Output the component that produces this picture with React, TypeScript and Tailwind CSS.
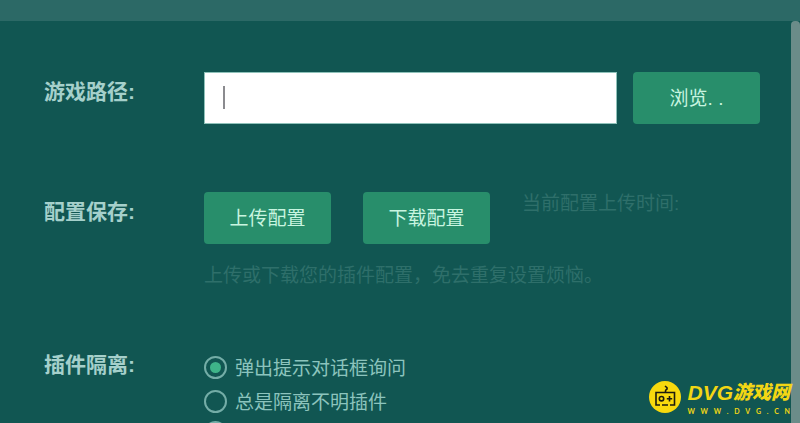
import { useState } from 'react';
import type { ReactNode } from 'react';

const MODOS = [
  { id: 'ask', label: '弹出提示对话框询问' },
  { id: 'always', label: '总是隔离不明插件' },
];

function Row({ title, htmlFor, children }: { title: string; htmlFor?: string; children: ReactNode }) {
  return (
    <section className="flex items-start">
      <label htmlFor={htmlFor} className="w-40 shrink-0 pt-1 text-[21px] leading-8 font-bold text-[#a5d0cb]">
        {title}
      </label>
      <div className="min-w-0 flex-1">{children}</div>
    </section>
  );
}

function Button({ children }: { children: ReactNode }) {
  return (
    <button type="button" className="h-13 w-[127px] shrink-0 rounded-[4px] bg-[#288e6b] pt-0.5 text-[19px] text-[#c8f5e0]">
      {children}
    </button>
  );
}

function Radio({ checked, onChange, label }: { checked: boolean; onChange: () => void; label?: string }) {
  return (
    <input
      type="radio"
      name="modo"
      aria-label={label}
      checked={checked}
      onChange={onChange}
      className="size-[23px] shrink-0 appearance-none rounded-full border-2 border-[#74ada7] bg-clip-content p-1 checked:bg-[#3eb489]"
    />
  );
}

function Brand() {
  return (
    <div className="absolute right-2.5 bottom-1.5 flex items-center gap-1.5">
      <svg viewBox="0 0 32 32" className="mb-1 size-8" aria-hidden="true">
        <circle cx="16" cy="16" r="16" fill="#f7d90d" />
        <g fill="none" stroke="#1b1b10" strokeWidth="1.6">
          <path d="M16.500 11.500V10q0-1 1-1.500t.500-1.800L16 5" />
          <path d="M11 24H7V11.500h18.500V24H21M13 24h6" />
          <circle cx="12.500" cy="17.700" r="2.200" />
          <path d="M20.500 15v5.400M17.800 17.700h5.400" />
        </g>
      </svg>
      <div className="text-[#f2d614]">
        <div className="flex h-5 items-center font-['Liberation_Sans','Noto_Sans_CJK_SC',sans-serif] font-black italic">
          <span className="text-[21px]">DVG</span>
          <span className="text-[19px]">游戏网</span>
        </div>
        <div className="mt-1 flex h-2 items-center justify-between font-['Lato',sans-serif] text-[7px] leading-none font-bold">
          {[...'WWW.DVG.CN'].map((c, i) => (
            <span key={i}>{c}</span>
          ))}
        </div>
      </div>
    </div>
  );
}

export default function App() {
  const [ruta, setRuta] = useState('');
  const [modo, setModo] = useState('ask');

  return (
    <div className="relative flex h-screen flex-col overflow-hidden bg-[#115652] font-['Liberation_Sans','Noto_Sans_CJK_SC',sans-serif]">
      <header className="h-[21px] shrink-0 bg-[#2c6966]" />
      <div className="flex min-h-0 flex-1">
        <main className="flex min-w-0 flex-1 flex-col overflow-hidden pt-[51px] pr-[31px] pl-[44px]">
          <Row title="游戏路径:" htmlFor="ruta">
            <div className="flex gap-4">
              <div className="relative min-w-0 flex-1">
                <input
                  id="ruta"
                  type="text"
                  value={ruta}
                  onChange={e => setRuta(e.target.value)}
                  className="h-13 w-full border border-[#8fc2ba] bg-white px-5 text-[19px] text-gray-700 caret-transparent outline-none"
                />
                {/* cursor de texto */}
                <span className="pointer-events-none absolute top-3.5 left-[19px] h-[23px] w-0.5 bg-[#8b8b8f]" />
              </div>
              <Button>浏览. .</Button>
            </div>
          </Row>

          <div className="h-[68px] shrink-0" />

          <Row title="配置保存:">
            <div className="flex items-start gap-8">
              <Button>上传配置</Button>
              <Button>下载配置</Button>
              <p className="text-[19px] leading-6 text-[#2e6f6a]">当前配置上传时间:</p>
            </div>
            <p className="mt-4 text-[19px] leading-8 whitespace-nowrap text-[#2e6f6a]">
              上传或下载您的插件配置，免去重复设置烦恼。
            </p>
          </Row>

          <div className="h-[53px] shrink-0" />

          <Row title="插件隔离:">
            <div className="flex flex-col pt-[5px]">
              {MODOS.map(m => (
                <label key={m.id} className="flex h-[34px] items-center gap-2 text-[19px] text-[#8cc4bd]">
                  <Radio checked={modo === m.id} onChange={() => setModo(m.id)} />
                  <span className="pt-1">{m.label}</span>
                </label>
              ))}
              <div className="flex h-7 items-center">
                <Radio checked={modo === 'never'} onChange={() => setModo('never')} label="从不隔离" />
              </div>
            </div>
          </Row>
        </main>
        <div className="w-[9px] shrink-0 rounded-t-[4px] bg-[#6b8c89]" />
      </div>
      <Brand />
    </div>
  );
}
